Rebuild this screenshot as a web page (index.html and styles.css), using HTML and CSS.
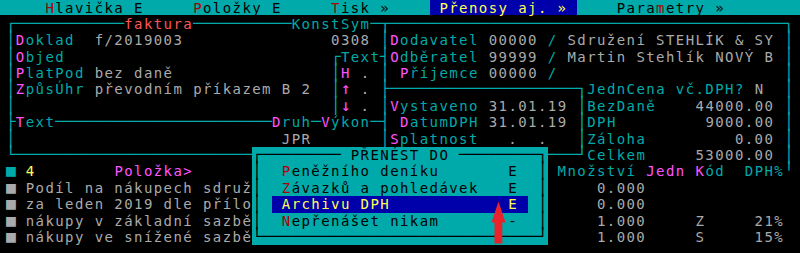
FILE: index.html
```html
<!DOCTYPE html>
<html lang="cs">
  <head>
    <meta charset="UTF-8" />
    <title>Faktura - Přenosy</title>
    <link rel="stylesheet" href="styles.css">
  </head>
  <body>
    <div class="screen">
      <!-- MENU -->
      <div class="row bar">    <span class="dr">H</span>lavička E     <span class="dr">P</span>oložky E     <span class="dr">T</span>isk »    <span class="sel"> Přenosy aj. » </span>    Para<span class="dr">m</span>etry »</div>

      <!-- HLAVICKA -->
      <div class="row"><span class="ln">┌───────────</span><span class="rd">faktura</span><span class="ln">──────────</span>KonstSym<span class="ln">─┬────────────────────────────────────────┐</span></div>
      <div class="row"><span class="ln">│</span><span class="mg">D</span>oklad  <span class="gr">f/2019003</span>               <span class="gr">0308</span> <span class="ln">│</span><span class="mg">D</span>odavatel <span class="gr">00000</span> / <span class="gr">Sdružení STEHLÍK &amp; SY</span> <span class="ln">│</span></div>
      <div class="row"><span class="ln">│</span><span class="mg">O</span>bjed                           <span class="ln">┌</span>Text<span class="ln">┤</span><span class="mg">O</span>dběratel <span class="gr">99999</span> / <span class="gr">Martin Stehlík NOVÝ B</span> <span class="ln">│</span></div>
      <div class="row"><span class="ln">│</span><span class="mg">P</span>latPod <span class="gr">bez daně</span>                <span class="ln">│</span><span class="mg">H</span> <span class="gr">.</span> <span class="ln">│</span> <span class="mg">P</span>říjemce <span class="gr">00000</span> /                       <span class="ln">│</span></div>
      <div class="row"><span class="ln">│</span><span class="mg">Z</span>půsÚhr <span class="gr">převodním příkazem B 2</span>  <span class="ln">│</span><span class="ln mg">↑</span> <span class="gr">.</span> <span class="ln">├───────────────────┐</span>JednCena vč.DPH? <span class="gr">N</span>  <span class="ln">│</span></div>
      <div class="row"><span class="ln">│</span>                                <span class="ln">│</span><span class="ln mg">↓</span> <span class="gr">.</span> <span class="ln">│</span><span class="mg">V</span>ystaveno <span class="gr">31.01.19</span> <span class="ln">│</span>BezDaně    <span class="gr">44000.00</span> <span class="ln">│</span></div>
      <div class="row"><span class="ln">├</span><span class="mg">T</span>ext<span class="ln">──────────────────────</span><span class="mg">D</span>ruh<span class="ln">─</span><span class="mg">V</span>ýkon<span class="ln">─┤</span> <span class="mg">D</span>atumDPH <span class="gr">31.01.19</span> <span class="ln">│</span>DPH         <span class="gr">9000.00</span> <span class="ln">│</span></div>
      <div class="row"><span class="ln">│</span>                           <span class="gr">JPR</span>       <span class="ln">│</span><span class="mg">S</span>platnost <span class="gr">  .  .  </span> <span class="ln">│</span>Záloha         <span class="gr">0.00</span> <span class="ln">│</span></div>
      <div class="row"><span class="ln">└────────────────────────</span><span class="under"></span><span class="ln">───┘</span>Celkem     <span class="gr">53000.00</span> <span class="ln">│</span></div>

      <!-- POLOZKY -->
      <div class="row"><span class="ln">■</span> <span class="yl">4</span>        <span class="mg">Položka&gt;</span>      <span class="under"></span> Množství <span class="mg">Jedn</span> <span class="mg">K</span>ód  DPH%<span class="ln">╵</span></div>
      <div class="row gr"><span class="ln">■</span> Podíl na nákupech sdruž<span class="under"></span>     0.000</div>
      <div class="row gr"><span class="ln">■</span> za leden 2019 dle přílo<span class="under"></span>     0.000</div>
      <div class="row gr"><span class="ln">■</span> nákupy v základní sazbě<span class="under"></span>     1.000     Z     21%</div>
      <div class="row gr"><span class="ln">■</span> nákupy ve snížené sazbě<span class="under"></span>     1.000     S     15%</div>

      <!-- PRENEST DO -->
      <div class="popup">
        <div class="row"><span class="ln">┌────────</span> PŘENÉST DO <span class="ln">────────┐</span></div>
        <div class="row"><span class="ln">│</span>  <span class="dr">P</span>eněžního deníku       E  <span class="ln">│</span></div>
        <div class="row"><span class="ln">│</span>  <span class="dr">Z</span>ávazků a pohledávek   E  <span class="ln">│</span></div>
        <div class="row"><span class="ln">│</span> <span class="sel"> Archivu DPH            E </span> <span class="ln">│</span></div>
        <div class="row"><span class="ln">│</span>  <span class="dr">N</span>epřenášet nikam       -  <span class="ln">│</span></div>
        <div class="row"><span class="ln">└────────────────────────────┘</span></div>
      </div>

      <svg class="arrow" width="16" height="44" viewBox="0 0 16 44">
        <path d="M7.5 0.5 L14.5 21.5 L11.3 21.5 L11.3 42.5 L3.5 42.5 L3.5 21.5 L0.5 21.5 Z" fill="#e8232b" />
      </svg>
    </div>
  </body>
</html>
```

FILE: styles.css
```css
body {
  margin: 0;
  background: #000;
  overflow: hidden;
}

/* 80 x 15 text screen, cell 9.85 x 16.4 px */
.screen {
  position: relative;
  margin-top: -0.5px;
  padding-left: 6px;
  font-family: "DejaVu Sans Mono", monospace;
  font-size: 14px;
  letter-spacing: 1.42px;
  line-height: 16.4px;
  color: #00aaaa;
}

.row {
  height: 16.4px;
  white-space: pre;
}

/* box lines and symbols, full cell width without gaps */
.ln {
  font-size: 16.36px;
  letter-spacing: 0;
  line-height: 0;
}

.bar {
  height: 15px;
  margin-bottom: 1.4px;
  margin-left: -6px;
  padding-left: 6px;
  background: #00aaaa;
  color: #000;
}

.sel {
  display: inline-block;
  vertical-align: top;
  height: 16.4px;
  background: #0000aa;
  color: #ffff55;
}

.bar .sel {
  height: 15px;
}

.under {
  display: inline-block;
  width: 295.5px;
}

.mg {
  color: #ff55ff;
}

.gr {
  color: #aaaaaa;
}

.yl {
  color: #ffff55;
}

.rd {
  color: #ff5555;
}

.dr {
  color: #aa0000;
}

.popup {
  position: absolute;
  left: 252.25px;
  top: 147.6px;
  width: 295.5px;
  background: #00aaaa;
  color: #000;
}

.arrow {
  position: absolute;
  left: 491px;
  top: 201.5px;
}
```
